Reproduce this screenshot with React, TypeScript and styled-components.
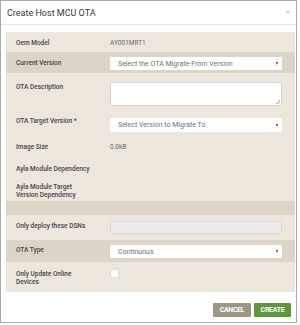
import styled, { createGlobalStyle } from 'styled-components';

const GlobalStyle = createGlobalStyle`
  html, body {
    margin: 0;
    padding: 0;
    background: #fff;
  }

  body {
    font-family: Roboto, 'Liberation Sans', sans-serif;
  }
`;

const Modal = styled.div`
  width: 297px;
  height: 323px;
  box-sizing: border-box;
  border: 1px solid #a9a9a9;
  background: #fff;
  display: flex;
  flex-direction: column;
`;

const Header = styled.div`
  height: 23px;
  border-bottom: 1px solid #e6e6e6;
  display: flex;
  align-items: center;
  justify-content: space-between;
  padding: 0 6px 0 6px;
`;

const Title = styled.h4`
  margin: 0;
  font-size: 9px;
  font-weight: 400;
  color: #3a3a3a;
`;

const Close = styled.span`
  font-size: 9px;
  color: #c8c8c8;
  line-height: 1;
`;

const Body = styled.div`
  padding: 7px 1px 0 5px;
`;

const Panel = styled.div`
  background: #ede6dd;
`;

const Row = styled.div<{ $dark?: boolean; $pad: string }>`
  display: grid;
  grid-template-columns: 94px 172px;
  align-items: start;
  padding: ${(p) => p.$pad};
  padding-left: 10px;
  padding-right: 12px;
  background: ${(p) => (p.$dark ? '#ddd4c8' : 'transparent')};
`;

const Label = styled.div<{ $mt?: number }>`
  margin-top: ${(p) => p.$mt ?? 0}px;
  font-size: 6.5px;
  line-height: 8px;
  font-weight: 500;
  color: #454545;
`;

const Value = styled.div<{ $mt?: number }>`
  margin-top: ${(p) => p.$mt ?? 0}px;
  font-size: 6.5px;
  line-height: 8px;
  color: #6b6b6b;
`;

const Select = styled.div<{ $h?: number }>`
  height: ${(p) => p.$h ?? 13}px;
  box-sizing: border-box;
  background: #fff;
  border-radius: 1px;
  display: flex;
  align-items: center;
  justify-content: space-between;
  padding: 0 4px 0 8px;
  font-size: 7px;
  color: #727272;
`;

const Caret = styled.span`
  width: 0;
  height: 0;
  border-left: 1.5px solid transparent;
  border-right: 1.5px solid transparent;
  border-top: 3px solid #333;
`;

const TextArea = styled.div`
  height: 24px;
  box-sizing: border-box;
  background: #fff;
  border: 1px solid #d6d6d6;
  border-radius: 1px;
  position: relative;

  &::after {
    content: '';
    position: absolute;
    right: 1px;
    bottom: 1px;
    width: 4px;
    height: 4px;
    background: linear-gradient(135deg, transparent 45%, #aaa 45%, #aaa 55%, transparent 55%, transparent 75%, #aaa 75%, #aaa 85%, transparent 85%);
  }
`;

const Input = styled.div`
  height: 13px;
  box-sizing: border-box;
  background: #ebebeb;
  border: 1px solid #d9d9d9;
  border-radius: 2px;
`;

const Checkbox = styled.div`
  width: 9px;
  height: 9px;
  box-sizing: border-box;
  background: #fff;
  border: 1px solid #dcdcdc;
  border-radius: 1px;
`;

const Footer = styled.div`
  display: flex;
  justify-content: flex-end;
  gap: 3px;
  padding: 11px 5px 0 0;
`;

const Button = styled.button<{ $primary?: boolean }>`
  height: 14px;
  width: ${(p) => (p.$primary ? 37 : 38)}px;
  border: none;
  border-radius: 1px;
  padding: 0;
  font-family: Roboto, 'Liberation Sans', sans-serif;
  font-size: 7px;
  font-weight: 700;
  letter-spacing: -0.3px;
  color: #fff;
  background: ${(p) => (p.$primary ? '#5f973c' : '#9b9783')};
`;

export default function App() {
  return (
    <>
      <GlobalStyle />
      <Modal>
        <Header>
          <Title>Create Host MCU OTA</Title>
          <Close>×</Close>
        </Header>
        <Body>
          <Panel>
            <Row $pad="7px 0 5px">
              <Label>Oem Model</Label>
              <Value>AY001MRT1</Value>
            </Row>
            <Row $dark $pad="5px 0 3px">
              <Label $mt={2}>Current Version</Label>
              <Select>
                Select the OTA Migrate-From Version
                <Caret />
              </Select>
            </Row>
            <Row $pad="9px 0 7px">
              <Label $mt={1}>OTA Description</Label>
              <TextArea />
            </Row>
            <Row $pad="5px 0 5px">
              <Label $mt={-1}>OTA Target Version *</Label>
              <Select $h={14}>
                Select Version to Migrate To
                <Caret />
              </Select>
            </Row>
            <Row $pad="6px 0 5px">
              <Label>Image Size</Label>
              <Value>0.0kB</Value>
            </Row>
            <Row $pad="9px 0 4px">
              <Label>Ayla Module Dependency</Label>
            </Row>
            <Row $pad="6px 0 2px">
              <Label>
                Ayla Module Target
                <br />
                Version Dependency
              </Label>
            </Row>
            <Row $dark $pad="14px 0 0" />
            <Row $pad="6px 0 6px">
              <Label $mt={1}>Only deploy these DSNs</Label>
              <Input />
            </Row>
            <Row $dark $pad="5px 0 4px">
              <Label $mt={1}>OTA Type</Label>
              <Select>
                Continuous
                <Caret />
              </Select>
            </Row>
            <Row $pad="7px 0 6px">
              <Label $mt={1}>
                Only Update Online
                <br />
                Devices
              </Label>
              <Checkbox />
            </Row>
          </Panel>
        </Body>
        <Footer>
          <Button>CANCEL</Button>
          <Button $primary>CREATE</Button>
        </Footer>
      </Modal>
    </>
  );
}
